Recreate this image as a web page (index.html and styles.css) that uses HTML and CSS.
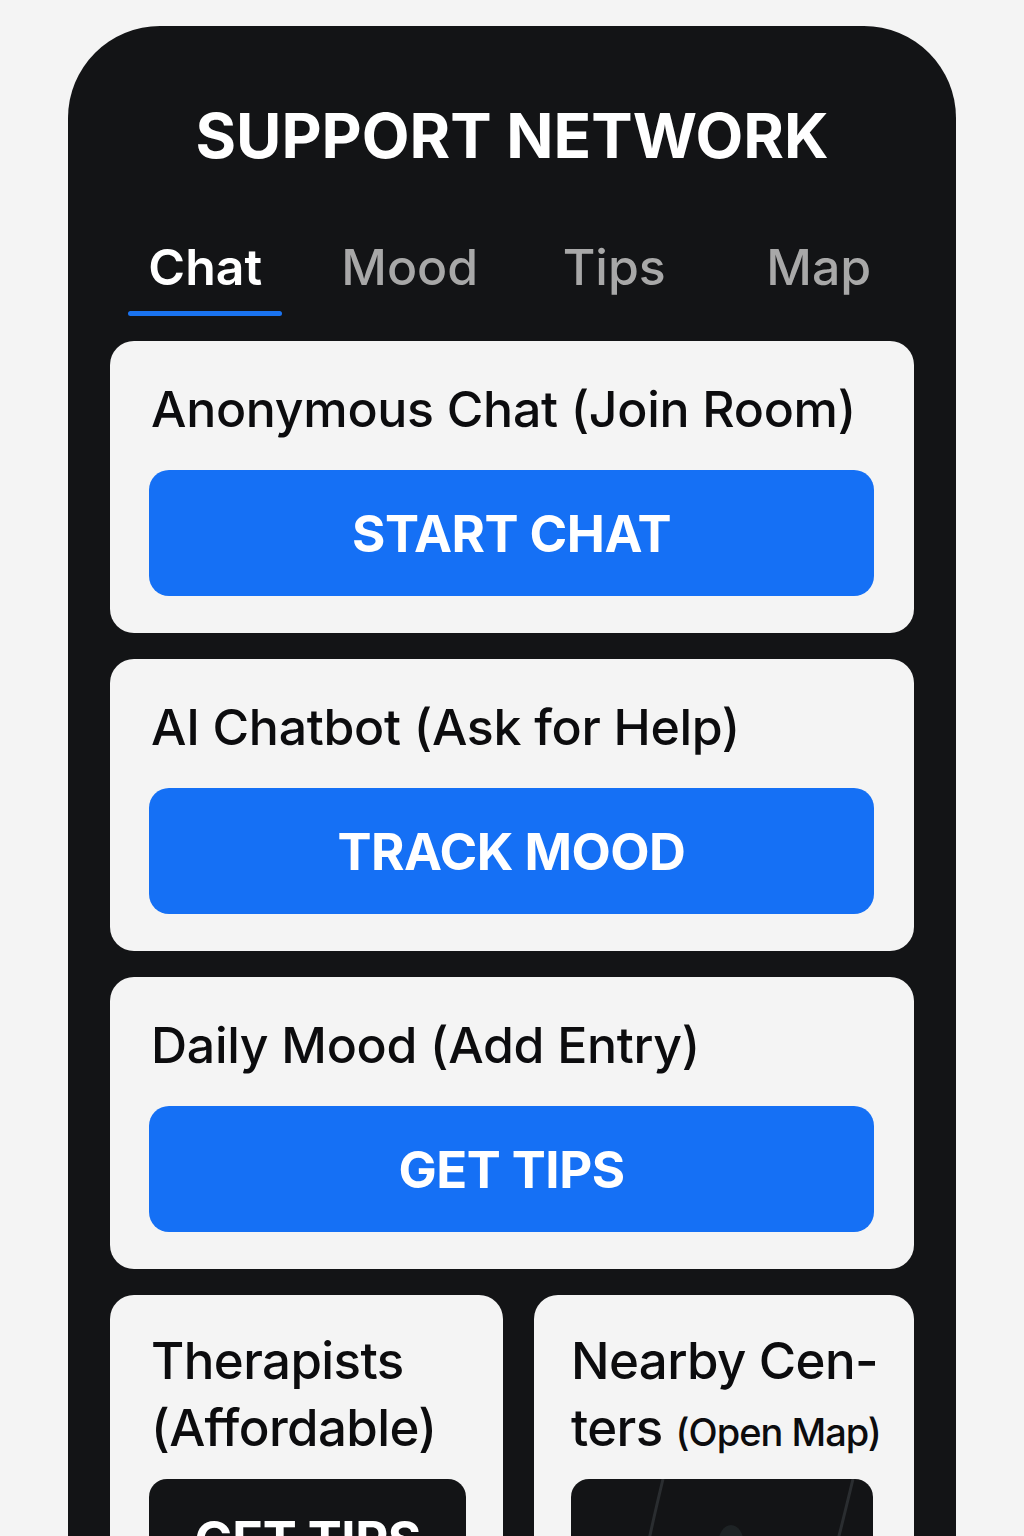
FILE: index.html
```html
<!DOCTYPE html>
<html lang="en">
<head>
<meta charset="utf-8">
<title>Support Network</title>
<link rel="stylesheet" href="styles.css">
</head>
<body>
<div class="phone">
  <h1 class="title">SUPPORT NETWORK</h1>
  <nav class="tabs">
    <div class="tab active"><span>Chat</span><i class="bar"></i></div>
    <div class="tab"><span>Mood</span></div>
    <div class="tab"><span>Tips</span></div>
    <div class="tab"><span>Map</span></div>
  </nav>
  <main class="cards">
    <section class="card">
      <h2 class="card-title">Anonymous Chat (Join Room)</h2>
      <button class="btn">START CHAT</button>
    </section>
    <section class="card">
      <h2 class="card-title">AI Chatbot (Ask for Help)</h2>
      <button class="btn">TRACK MOOD</button>
    </section>
    <section class="card">
      <h2 class="card-title">Daily Mood (Add Entry)</h2>
      <button class="btn">GET TIPS</button>
    </section>
    <div class="row">
      <section class="card small left">
        <h2 class="card-title two">Therapists<br>(Affordable)</h2>
        <button class="btn dark">GET TIPS</button>
      </section>
      <section class="card small right">
        <h2 class="card-title two">Nearby Cen-<br>ters <span class="sm">(Open Map)</span></h2>
        <div class="mapbox">
          <svg width="302" height="80" viewBox="0 0 302 80">
            <path d="M92 0 C86 25 80 50 74 80" stroke="#2a2d30" stroke-width="3" fill="none"/>
            <path d="M282 0 C276 25 270 50 262 80" stroke="#2a2d30" stroke-width="3" fill="none"/>
            <ellipse cx="160" cy="66" rx="13" ry="20" fill="#1e2325"/>
          </svg>
        </div>
      </section>
    </div>
  </main>
</div>
</body>
</html>
```
FILE: styles.css
```css
html, body {
  margin: 0;
  padding: 0;
}
body {
  background: #f4f4f4;
  height: 1536px;
  overflow: hidden;
  font-family: Inter, "Noto Sans", "Liberation Sans", sans-serif;
}
.phone {
  margin: 26px 0 0 68px;
  width: 888px;
  box-sizing: border-box;
  min-height: 1600px;
  background: #131416;
  border-radius: 92px 92px 0 0;
  padding: 70px 42px 0;
}
.title {
  margin: 0;
  color: #ffffff;
  font-size: 62px;
  line-height: 80px;
  font-weight: 700;
  text-align: center;
  letter-spacing: 0;
}
.tabs {
  margin: 59px -7px 0;
  display: grid;
  grid-template-columns: repeat(4, 1fr);
}
.tab {
  display: flex;
  flex-direction: column;
  align-items: center;
  color: #a8a8a8;
  font-size: 50px;
  line-height: 64px;
  font-weight: 500;
  height: 81px;
}
.tab.active {
  color: #ffffff;
  font-weight: 600;
}
.bar {
  display: block;
  margin-top: 12px;
  width: 154px;
  height: 5px;
  border-radius: 3px;
  background: #1a73f0;
}
.cards {
  margin-top: 25px;
  display: flex;
  flex-direction: column;
  gap: 26px;
}
.card {
  background: #f4f4f4;
  border-radius: 24px;
  padding: 38px 40px 37px 39px;
}
.card-title {
  margin: 0 0 31px 2px;
  color: #0c0c0e;
  font-size: 50px;
  line-height: 60px;
  font-weight: 500;
  letter-spacing: -0.3px;
  white-space: nowrap;
}
.btn {
  display: block;
  width: 100%;
  height: 126px;
  border: 0;
  border-radius: 20px;
  background: #1570f5;
  color: #ffffff;
  font-family: inherit;
  font-size: 51px;
  font-weight: 700;
  letter-spacing: -0.5px;
  padding: 0;
}
.row {
  display: grid;
  grid-template-columns: 393px 380px;
  gap: 31px;
}
.card.small {
  padding: 32px 37px 40px 39px;
  min-height: 300px;
}
.card.small.right {
  padding-left: 35px;
}
.card-title.two {
  font-size: 51px;
  line-height: 67px;
  margin-bottom: 18px;
  letter-spacing: -0.6px;
}
.sm {
  font-size: 38px;
  line-height: 1;
  letter-spacing: -1px;
}
.btn.dark {
  background: #131416;
  height: 120px;
  border-radius: 18px;
}
.mapbox {
  width: 302px;
  height: 120px;
  background: #131416;
  border-radius: 18px;
  overflow: hidden;
  margin-left: 2px;
}
.mapbox svg {
  display: block;
}
```
